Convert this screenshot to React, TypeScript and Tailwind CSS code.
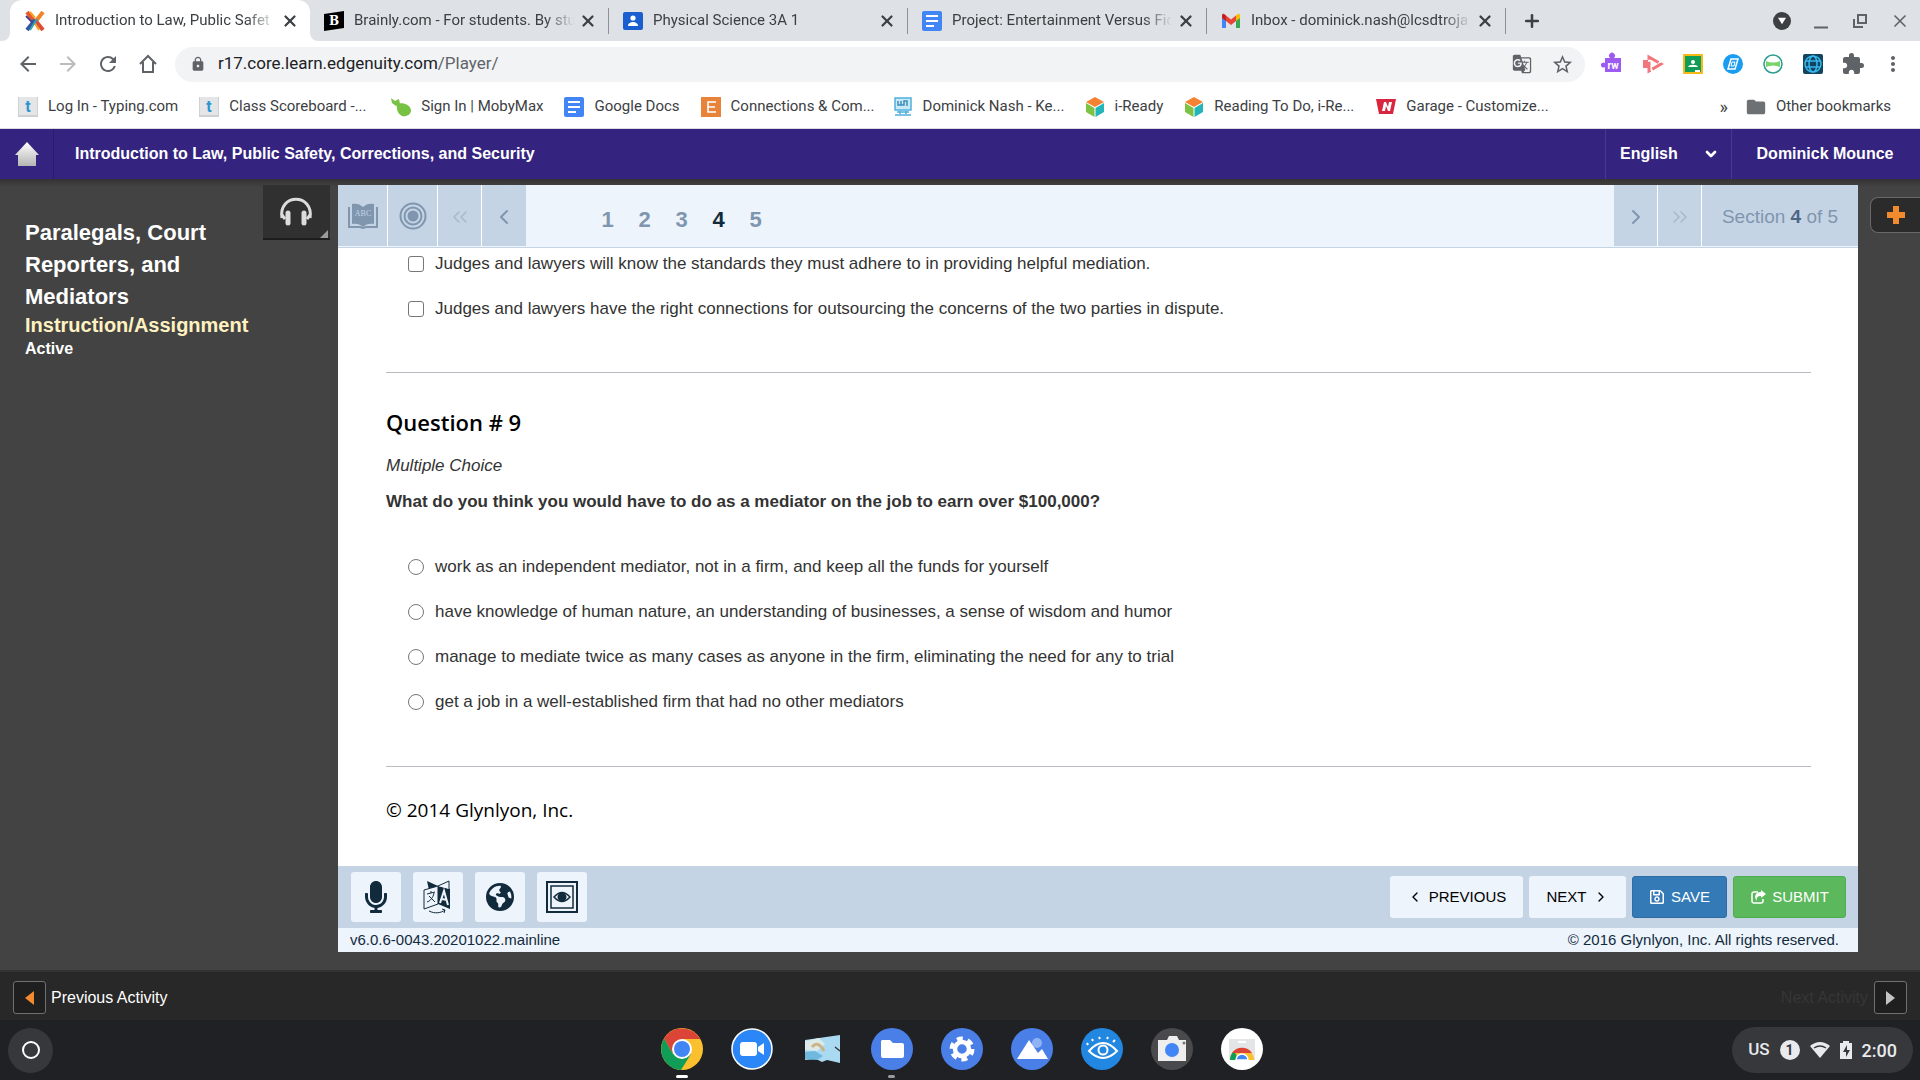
import React from "react";
import {
  MdArrowBack,
  MdArrowForward,
  MdExtension,
  MdFolder,
  MdGTranslate,
  MdLock,
  MdMoreVert,
  MdRefresh,
  MdStarBorder,
} from "react-icons/md";
import { FaMicrophone, FaRegSave } from "react-icons/fa";
import { FaEarthAmericas } from "react-icons/fa6";
import {
  ChevronDown,
  ChevronLeft,
  ChevronRight,
  ChevronsLeft,
  ChevronsRight,
  Plus,
  X,
} from "lucide-react";

/* ---------- favicons ---------- */

const EdgenuityIcon = () => (
  <svg viewBox="0 0 20 20" className="size-5 shrink-0" fill="none" strokeWidth="4">
    <path d="M2 1l7 9" stroke="#e9552c" />
    <path d="M5 1l5 6" stroke="#f5a31f" strokeWidth="2" />
    <path d="M18 1l-7 9" stroke="#f08427" />
    <path d="M10 9l8 10" stroke="#dd4a35" />
    <path d="M9 11l5 8" stroke="#f5a31f" strokeWidth="2" />
    <path d="M10 9L2 19" stroke="#35559f" />
    <path d="M12 8l-7 11" stroke="#2fa5b5" strokeWidth="2" />
    <path d="M1 5l6 6" stroke="#4a3b8f" strokeWidth="2" />
  </svg>
);

const BrainlyIcon = () => (
  <svg viewBox="0 0 20 20" className="size-5 shrink-0">
    <path d="M0 3l20-3v17L0 20z" fill="#000" />
    <text x="10" y="14" fontSize="12" fontWeight="700" fill="#fff" textAnchor="middle" fontFamily="DejaVu Serif, serif">
      B
    </text>
  </svg>
);

const ClassIcon = () => (
  <svg viewBox="0 0 20 20" className="size-5 shrink-0">
    <rect y="1" width="20" height="18" rx="2" fill="#1a5fcf" />
    <circle cx="10" cy="7" r="2.6" fill="#fff" />
    <path d="M5 15c0-3 3-4 5-4s5 1 5 4z" fill="#fff" />
  </svg>
);

const DocsIcon = () => (
  <svg viewBox="0 0 20 20" className="size-5 shrink-0">
    <rect width="20" height="20" rx="2" fill="#4285f4" />
    <path d="M4 5h12M4 10h12M4 15h8" stroke="#fff" strokeWidth="2" />
  </svg>
);

const GmailIcon = () => (
  <svg viewBox="0 0 20 20" className="size-5 shrink-0">
    <path d="M1 5v12h4V8z" fill="#4285f4" />
    <path d="M19 5v12h-4V8z" fill="#34a853" />
    <path d="M15 4.500l1.500-1.300c1-.8 2.500-.2 2.500 1.300v2.500l-4 3z" fill="#fbbc04" />
    <path d="M5 4.500L3.500 3.200C2.500 2.400 1 3 1 4.500V7l4 3z" fill="#c5221f" />
    <path d="M5 4.500l5 4 5-4V10l-5 4-5-4z" fill="#ea4335" />
  </svg>
);

const TypingIcon = () => (
  <svg viewBox="0 0 20 20" className="size-5 shrink-0 overflow-visible">
    <rect width="20" height="20" fill="#cfd0d1" />
    <rect x="1" width="18" height="18" fill="#e4e5e6" />
    <text x="10" y="15" fontSize="16" fontWeight="700" fill="#2f96d0" textAnchor="middle" fontFamily="Roboto, sans-serif">
      t
    </text>
  </svg>
);

const MobyIcon = () => (
  <svg viewBox="0 0 20 20" className="size-5 shrink-0" fill="#77c143">
    <path d="M0 1l4 3 4-2 1 5-4 2-4-3z" />
    <path d="M6 7c5-2 13 0 14 6 0 5-5 7-9 6-4-2-6-7-5-12z" />
  </svg>
);

const EIcon = () => (
  <svg viewBox="0 0 20 20" className="size-5 shrink-0">
    <rect width="20" height="20" fill="#e8833a" />
    <path d="M15 5H7v10h8M7 10h7" fill="none" stroke="#fff" strokeWidth="1.600" />
  </svg>
);

const MonitorIcon = () => (
  <svg viewBox="0 0 20 20" className="size-5 shrink-0" fill="none" stroke="#4fb0dc" strokeWidth="1.500">
    <rect x="2" y="1" width="16" height="12" fill="#c9e9f7" />
    <path d="M5 4v4h3V4M8 8h3V4h3v5" stroke="#3d8fbb" />
    <path d="M4 15h12M7 14v3M13 14v3M2 18h16" />
  </svg>
);

const CubeIcon = () => (
  <svg viewBox="0 0 20 20" className="size-5 shrink-0">
    <path d="M10 0l9 5-9 5-9-5z" fill="#f58233" />
    <path d="M1 6l8.500 5v9L1 15z" fill="#7dc243" />
    <path d="M19 6l-8.500 5v9l8.500-5z" fill="#23b5b8" />
  </svg>
);

const GarageIcon = () => (
  <svg viewBox="0 0 20 20" className="size-5 shrink-0">
    <path d="M0 2h20l-3 15H3z" fill="#d7263d" />
    <path d="M6 14l2-9h2l2 5 1-5h3l-2 9h-2l-2-5-1 5z" fill="#fff" />
  </svg>
);

/* ---------- browser chrome ---------- */

const tabs = [
  { icon: <EdgenuityIcon />, title: "Introduction to Law, Public Safet" },
  { icon: <BrainlyIcon />, title: "Brainly.com - For students. By stu" },
  { icon: <ClassIcon />, title: "Physical Science 3A 1" },
  { icon: <DocsIcon />, title: "Project: Entertainment Versus Fic" },
  { icon: <GmailIcon />, title: "Inbox - dominick.nash@lcsdtroja" },
];

const TabStrip = () => (
  <div className="flex h-[41px] items-center bg-[#dee1e6] pl-[10px] text-[#3c4043]">
    {tabs.map((tab, i) => (
      <div
        key={tab.title}
        className={
          i === 0
            ? "relative flex h-full w-[300px] items-center rounded-t-xl bg-white pr-[11px] pl-[15px]"
            : "flex h-[26px] w-[299px] items-center border-r border-[#8e9297] pr-[11px] pl-[14px]"
        }
      >
        {i === 0 && (
          <>
            <span className="absolute bottom-0 -left-2 h-2 w-2 bg-white">
              <span className="block h-2 w-2 rounded-br-lg bg-[#dee1e6]" />
            </span>
            <span className="absolute -right-2 bottom-0 h-2 w-2 bg-white">
              <span className="block h-2 w-2 rounded-bl-lg bg-[#dee1e6]" />
            </span>
          </>
        )}
        {tab.icon}
        <span className="ml-[10px] w-[225px] shrink-0 mask-r-from-85% mask-r-to-98% text-[15px] whitespace-nowrap">
          {tab.title}
        </span>
        <button aria-label="Close tab" className="ml-auto">
          <X className="size-[18px]" strokeWidth={3} />
        </button>
      </div>
    ))}
    <button aria-label="New tab" className="ml-4">
      <Plus className="size-5" strokeWidth={3} />
    </button>
    <div className="ml-auto flex items-center gap-[21px] pr-[10px] text-[#5f6368]">
      <button aria-label="Search tabs" className="flex size-[18px] items-center justify-center rounded-full bg-[#3c4043]">
        <svg viewBox="0 0 10 8" className="h-2 w-2">
          <path d="M0 0h10L5 8z" fill="#fff" />
        </svg>
      </button>
      <button aria-label="Minimize">
        <svg viewBox="0 0 18 18" className="size-[18px]">
          <path d="M2 15.500h14" stroke="currentColor" strokeWidth="2" />
        </svg>
      </button>
      <button aria-label="Restore">
        <svg viewBox="0 0 18 18" className="size-[18px]" fill="none" stroke="currentColor" strokeWidth="2">
          <path d="M7 3h8v8H7zM3 7v8h9" />
        </svg>
      </button>
      <button aria-label="Close window">
        <X className="size-5" strokeWidth={2} />
      </button>
    </div>
  </div>
);

const extensions = [
  {
    name: "Read&Write",
    art: (
      <>
        <path d="M4 6h5a3 3 0 1 1 4 0h7v14H4v-5a2.500 2.500 0 1 1 0-4z" fill="#9d5cf0" />
        <text x="12" y="17" fontSize="10" fontWeight="700" fill="#fff" textAnchor="middle" fontFamily="Roboto, sans-serif">
          rw
        </text>
      </>
    ),
  },
  {
    name: "Screencastify",
    art: (
      <>
        <path d="M2 8h5v8H2z" fill="#f2777a" />
        <path d="M8 5l12 7-12 7z" fill="none" stroke="#f2777a" strokeWidth="3" strokeDasharray="11 2" />
      </>
    ),
  },
  {
    name: "Google Classroom",
    art: (
      <>
        <rect x="2" y="2" width="20" height="20" rx="1" fill="#f5ba15" />
        <rect x="4" y="4" width="16" height="16" fill="#0f9d58" />
        <circle cx="12" cy="10" r="2" fill="#fff" />
        <path d="M7 15c1-3 9-3 10 0zM14 18h5v2h-5z" fill="#fff" />
      </>
    ),
  },
  {
    name: "Nearpod",
    art: (
      <>
        <circle cx="12" cy="12" r="10" fill="#1a9df0" />
        <path d="M10 7h7l-3 10H7z" fill="none" stroke="#fff" strokeWidth="1.500" />
        <path d="M11 10h3l-1 4h-3z" fill="none" stroke="#fff" />
      </>
    ),
  },
  {
    name: "Kami",
    art: (
      <>
        <circle cx="12" cy="12" r="9" fill="#fff" stroke="#2c9c8f" strokeWidth="1.500" />
        <path d="M5 9q7 3 14 0v6q-7-3-14 0z" fill="#7ad26a" />
      </>
    ),
  },
  {
    name: "Globe",
    art: (
      <>
        <rect x="2" y="2" width="20" height="20" rx="2" fill="#12435f" />
        <g fill="none" stroke="#35b8ee" strokeWidth="1.500">
          <circle cx="12" cy="12" r="8" />
          <ellipse cx="12" cy="12" rx="4" ry="8" />
          <path d="M5 9h14M5 15h14" />
        </g>
      </>
    ),
  },
];

const Toolbar = () => (
  <div className="flex h-[46px] items-center bg-white pr-[15px] pl-4 text-[#5f6368]">
    <div className="flex w-[159px] items-center gap-4">
      <button aria-label="Back">
        <MdArrowBack className="size-6" />
      </button>
      <button aria-label="Forward" className="text-[#babcbe]">
        <MdArrowForward className="size-6" />
      </button>
      <button aria-label="Reload">
        <MdRefresh className="size-6" />
      </button>
      <button aria-label="Home">
        <svg viewBox="0 0 24 24" className="size-6" fill="none" stroke="currentColor" strokeWidth="2">
          <path d="M4 12l8-8 8 8M7 10v10h10V10" />
        </svg>
      </button>
    </div>
    <div className="flex h-[35px] flex-1 items-center rounded-full bg-[#f1f3f4] pr-[11px] pl-[15px]">
      <MdLock className="size-4" />
      <p className="ml-3 flex-1 text-[17px] text-[#5f6368]">
        <span className="text-[#202124]">r17.core.learn.edgenuity.com</span>/Player/
      </p>
      <button aria-label="Translate this page">
        <MdGTranslate className="size-5" />
      </button>
      <button aria-label="Bookmark this page" className="ml-[19px]">
        <MdStarBorder className="size-[23px]" />
      </button>
    </div>
    <div className="ml-4 flex items-center gap-4">
      {extensions.map((ext) => (
        <button key={ext.name} aria-label={ext.name}>
          <svg viewBox="0 0 24 24" className="size-6">
            {ext.art}
          </svg>
        </button>
      ))}
      <button aria-label="Extensions">
        <MdExtension className="size-6" />
      </button>
      <button aria-label="Menu">
        <MdMoreVert className="size-6" />
      </button>
    </div>
  </div>
);

const bookmarks = [
  { icon: <TypingIcon />, label: "Log In - Typing.com" },
  { icon: <TypingIcon />, label: "Class Scoreboard -...", cut: true },
  { icon: <MobyIcon />, label: "Sign In | MobyMax" },
  { icon: <DocsIcon />, label: "Google Docs" },
  { icon: <EIcon />, label: "Connections & Com...", cut: true },
  { icon: <MonitorIcon />, label: "Dominick Nash - Ke...", cut: true },
  { icon: <CubeIcon />, label: "i-Ready" },
  { icon: <CubeIcon />, label: "Reading To Do, i-Re...", cut: true },
  { icon: <GarageIcon />, label: "Garage - Customize...", cut: true },
];

const BookmarksBar = () => (
  <div className="flex h-[42px] items-center gap-[21px] border-b border-[#dadce0] bg-white pb-[2px] pl-[18px] text-[15px] whitespace-nowrap text-[#3c4043]">
    {bookmarks.map((b) => (
      <a key={b.label} href="#" className="flex items-center gap-[10px]">
        {b.icon}
        <span className={b.cut ? "w-[141px]" : ""}>{b.label}</span>
      </a>
    ))}
    <button aria-label="More bookmarks" className="ml-auto text-lg leading-5">
      »
    </button>
    <a href="#" className="-ml-1 flex items-center gap-[9px] pr-[29px]">
      <MdFolder className="size-[22px] text-[#6e7174]" />
      Other bookmarks
    </a>
  </div>
);

/* ---------- course player ---------- */

const Header = () => (
  <header className="flex h-[50px] items-stretch bg-[#35247f] text-[16px] font-bold text-white">
    <a href="#" aria-label="Home" className="flex w-[54px] items-center justify-center border-r border-[#2a1c69]">
      <svg viewBox="0 0 24 24" className="size-6">
        <defs>
          <linearGradient id="house" x1="0" y1="0" x2="0" y2="1">
            <stop offset="0" stopColor="#ffffff" />
            <stop offset="1" stopColor="#b4b4b4" />
          </linearGradient>
        </defs>
        <path d="M12 0l12 13h-3v11H3V13H0z" fill="url(#house)" />
      </svg>
    </a>
    <h1 className="flex flex-1 items-center pl-[21px]">
      Introduction to Law, Public Safety, Corrections, and Security
    </h1>
    <label className="flex w-[126px] items-center border-l border-[#483891] pr-3 pl-[14px]">
      <select aria-label="Language" className="flex-1 appearance-none bg-transparent font-bold outline-none">
        <option>English</option>
      </select>
      <ChevronDown className="size-4" strokeWidth={4} />
    </label>
    <button className="w-[189px] border-l border-[#483891] pr-[2px] font-bold">Dominick Mounce</button>
  </header>
);

const Sidebar = () => (
  <aside className="flex w-[338px] shrink-0 items-start pr-2 pl-[25px] font-bold text-white">
    <div className="flex-1 pt-8">
      <h2 className="text-[22px] leading-8">
        Paralegals, Court Reporters, and Mediators
      </h2>
      <p className="text-[20px] leading-6 text-[#fff2c0]">Instruction/Assignment</p>
      <p className="text-[16px] leading-6">Active</p>
    </div>
    <button
      aria-label="Audio"
      className="relative -ml-4 flex h-[55px] w-[67px] items-center justify-center border-b-2 border-[#1c1c1c] bg-[#303030] pr-[2px]"
    >
      <svg viewBox="0 0 34 30" className="h-[30px] w-[34px]" fill="none" stroke="#dcdcdc">
        <path d="M3 21C-1 -4 35 -4 31 21" strokeWidth="3" />
        <path d="M9 16v10M25 16v10" strokeWidth="5" strokeLinecap="round" />
        <path d="M3 18l3 4M31 18l-3 4" strokeWidth="3" />
      </svg>
      <svg viewBox="0 0 8 8" className="absolute right-0.5 bottom-0 size-2">
        <path d="M8 0v8H0z" fill="#9a9a9a" />
      </svg>
    </button>
  </aside>
);

const pages = [1, 2, 3, 4, 5];

const SectionNav = () => (
  <nav className="flex h-[63px] border-b border-[#c5d4e5] bg-[#edf4fc] text-[#7f96ae]">
    <div className="mb-px flex gap-px bg-white">
      <button aria-label="Glossary" className="flex w-[49px] items-center justify-center bg-[#c5d4e5]">
        <svg viewBox="0 0 30 26" className="h-[26px] w-[30px]">
          <path d="M1 4v20h11l3 1 3-1h11V4" fill="none" stroke="currentColor" strokeWidth="2" />
          <path d="M4 1c4-1 8 0 11 3 3-3 7-4 11-3v20c-4-1-8 0-11 3-3-3-7-4-11-3z" fill="currentColor" />
          <text x="15" y="13" fontSize="8" fill="#c5d4e5" textAnchor="middle" fontFamily="Liberation Serif, serif">
            ABC
          </text>
        </svg>
      </button>
      <button aria-label="Objectives" className="flex w-[49px] items-center justify-center bg-[#c5d4e5]">
        <svg viewBox="0 0 28 28" className="size-7" fill="none" stroke="currentColor" strokeWidth="2">
          <circle cx="14" cy="14" r="12.500" />
          <circle cx="14" cy="14" r="8.500" />
          <circle cx="14" cy="14" r="4.500" fill="currentColor" />
        </svg>
      </button>
      <button aria-label="First section" className="flex w-[43px] items-center justify-center bg-[#c5d4e5] pt-[2px] text-[#a7b8ca]">
        <ChevronsLeft className="size-6" strokeWidth={1.5} />
      </button>
      <button aria-label="Previous section" className="flex w-11 items-center justify-center bg-[#c5d4e5] pt-[2px]">
        <ChevronLeft className="size-6" />
      </button>
    </div>
    <div className="flex flex-1 items-center gap-3 pt-[6px] pl-[69px] text-[22px] font-bold">
      {pages.map((n) => (
        <button key={n} className={n === 4 ? "w-[25px] font-bold text-[#122b3c]" : "w-[25px] font-bold"}>
          {n}
        </button>
      ))}
    </div>
    <div className="mb-px flex gap-px bg-white">
      <button aria-label="Next section" className="flex w-[43px] items-center justify-center bg-[#c5d4e5] pt-[2px]">
        <ChevronRight className="size-6" />
      </button>
      <button aria-label="Last section" className="flex w-[43px] items-center justify-center bg-[#c5d4e5] pt-[2px] text-[#a7b8ca]">
        <ChevronsRight className="size-6" strokeWidth={1.5} />
      </button>
      <p className="flex w-[156px] items-center justify-center bg-[#c5d4e5] pt-[3px] text-[19px] whitespace-pre">
        Section <b className="text-[#4c6682]">4</b> of 5
      </p>
    </div>
  </nav>
);

const checks = [
  "Judges and lawyers will know the standards they must adhere to in providing helpful mediation.",
  "Judges and lawyers have the right connections for outsourcing the concerns of the two parties in dispute.",
];

const choices = [
  "work as an independent mediator, not in a firm, and keep all the funds for yourself",
  "have knowledge of human nature, an understanding of businesses, a sense of wisdom and humor",
  "manage to mediate twice as many cases as anyone in the firm, eliminating the need for any to trial",
  "get a job in a well-established firm that had no other mediators",
];

const Questions = () => (
  <main className="flex-1 bg-white pr-[47px] pl-12 text-[17px] text-[#333]">
    <div className="flex flex-col gap-[21px] border-b border-[#b9bdc1] pt-1 pb-[51px] pl-[22px]">
      {checks.map((text) => (
        <label key={text} className="flex h-6 items-center gap-[11px]">
          <input type="checkbox" className="size-4 appearance-none rounded-[3px] border border-[#767676]" />
          {text}
        </label>
      ))}
    </div>
    <div className="border-b border-[#b9bdc1] pt-[33px] pb-[52px]">
      <h3 className="font-['Open_Sans'] text-[22px] leading-8 font-semibold text-black">Question # 9</h3>
      <p className="mt-4 leading-6 italic">Multiple Choice</p>
      <p className="mt-3 leading-6 font-bold">
        What do you think you would have to do as a mediator on the job to earn over $100,000?
      </p>
      <div className="mt-[41px] flex flex-col gap-[21px] pl-[22px]">
        {choices.map((text) => (
          <label key={text} className="flex h-6 items-center gap-[11px]">
            <input type="radio" name="q9" className="size-4 appearance-none rounded-full border border-[#767676]" />
            {text}
          </label>
        ))}
      </div>
    </div>
    <p className="pt-[27px] pb-10 font-['Open_Sans'] text-[19px] leading-8 text-black">© 2014 Glynlyon, Inc.</p>
  </main>
);

const TranslateIcon = () => (
  <svg viewBox="0 0 30 34" className="h-[34px] w-[30px]">
    <path d="M4 1l11 5-9 4zM15 6l12 3v20l-12-5z" fill="#122b3c" />
    <path d="M15 6L26 1v8M1 10l14-4v18L1 29z" fill="#edf4fc" stroke="#122b3c" />
    <path d="M4 14l8-2M8 11v2M11 13c-1 5-4 8-7 9M6 16l6 6M6 31c6 3 12 2 16-1M22 30l-3-1M22 30l-1 3" fill="none" stroke="#122b3c" />
    <path d="M17 23l4-12 4 14M19 19l5 1" fill="none" stroke="#edf4fc" strokeWidth="2" />
  </svg>
);

const FrameIcon = () => (
  <svg viewBox="0 0 32 32" className="size-8" fill="none" stroke="#122b3c" strokeWidth="2">
    <rect x="1" y="1" width="30" height="30" />
    <rect x="5" y="5" width="22" height="22" strokeWidth="1.500" />
    <path d="M8 16q8-9 16 0q-8 9-16 0z" strokeWidth="1.500" />
    <circle cx="16" cy="16" r="3.500" fill="#122b3c" />
  </svg>
);

const ShareIcon = () => (
  <svg viewBox="0 0 16 16" className="size-4">
    <path d="M8 3H4a2 2 0 0 0-2 2v7a2 2 0 0 0 2 2h7a2 2 0 0 0 2-2v-2" fill="none" stroke="currentColor" strokeWidth="1.500" />
    <path d="M11 1l5 4-5 4V7C8 7 6 8 7 12 3 7 6 3 11 3z" fill="currentColor" />
  </svg>
);

const tools = [
  { name: "Record", icon: <FaMicrophone className="size-8" /> },
  { name: "Translate", icon: <TranslateIcon /> },
  { name: "Web", icon: <FaEarthAmericas className="size-7" /> },
  { name: "Screen mask", icon: <FrameIcon /> },
];

const ActionBar = () => (
  <div className="flex h-[62px] items-center bg-[#c5d4e5] pr-3 pl-[13px] text-[15px] text-black">
    <div className="flex gap-3">
      {tools.map((tool) => (
        <button
          key={tool.name}
          aria-label={tool.name}
          className="flex size-[50px] items-center justify-center rounded-[3px] bg-[#edf4fc] text-[#122b3c]"
        >
          {tool.icon}
        </button>
      ))}
    </div>
    <div className="ml-auto flex gap-[6px]">
      <button className="flex h-[42px] w-[133px] items-center justify-center gap-[6px] rounded-[3px] bg-[#edf4fc]">
        <ChevronLeft className="size-4" />
        PREVIOUS
      </button>
      <button className="flex h-[42px] w-[97px] items-center justify-center gap-[6px] rounded-[3px] bg-[#edf4fc]">
        NEXT
        <ChevronRight className="size-4" />
      </button>
      <button className="flex h-[42px] w-[95px] items-center justify-center gap-[6px] rounded-[3px] border border-[#2e6da4] bg-[#337ab7] text-white">
        <FaRegSave className="size-4" />
        SAVE
      </button>
      <button className="flex h-[42px] w-[113px] items-center justify-center gap-[6px] rounded-[3px] border border-[#4cae4c] bg-[#5cb85c] text-white">
        <ShareIcon />
        SUBMIT
      </button>
    </div>
  </div>
);

const Player = () => (
  <div className="flex flex-1 bg-[#434343] bg-linear-to-b from-[#333] to-[#434343] to-[8px] pt-[6px] pb-[18px]">
    <Sidebar />
    <section className="flex min-w-0 flex-1 flex-col">
      <SectionNav />
      <Questions />
      <ActionBar />
      <div className="flex h-6 items-center justify-between bg-[#edf4fc] pr-[19px] pl-3 text-[15px] text-[#122b3c]">
        <span>v6.0.6-0043.20201022.mainline</span>
        <span>© 2016 Glynlyon, Inc. All rights reserved.</span>
      </div>
    </section>
    <div className="flex w-[62px] shrink-0 items-start justify-end pt-3">
      <button
        aria-label="Expand"
        className="flex h-9 w-[50px] items-center justify-center rounded-l-lg border border-r-0 border-[#686868] bg-[#2b2b2b]"
      >
        <svg viewBox="0 0 18 18" className="size-[18px]">
          <path d="M6 0h6v6h6v6h-6v6H6v-6H0V6h6z" fill="#f28a2e" />
        </svg>
      </button>
    </div>
  </div>
);

const ActivityBar = () => (
  <footer className="flex h-[50px] items-center justify-between border-t-2 border-[#333] bg-[#282828] px-[13px] pt-[3px] text-[16px]">
    <button className="flex items-center gap-[5px] text-white">
      <span className="flex size-[33px] items-center justify-center rounded-[3px] border border-[#707070] bg-[#1f1f1f]">
        <svg viewBox="0 0 9 14" className="h-[14px] w-[9px]">
          <path d="M9 0v14L0 7z" fill="#f28a2e" />
        </svg>
      </span>
      Previous Activity
    </button>
    <button className="flex items-center gap-[6px] text-[#363636]">
      Next Activity
      <span className="flex size-[33px] items-center justify-center rounded-[3px] border border-[#707070] bg-[#1f1f1f]">
        <svg viewBox="0 0 9 14" className="h-[14px] w-[9px]">
          <path d="M0 0v14l9-7z" fill="#c4c4c4" />
        </svg>
      </span>
    </button>
  </footer>
);

/* ---------- system shelf ---------- */

const apps = [
  {
    name: "Chrome",
    open: "h-[3px] w-3 rounded-full bg-white",
    art: (
      <>
        <circle cx="21" cy="21" r="21" fill="#fbc02d" />
        <path d="M3 10.500A21 21 0 0 1 39.200 11H21l-9 15z" fill="#db4437" />
        <path d="M3 10.500A21 21 0 0 0 20 42l10-16H12z" fill="#0f9d58" />
        <circle cx="21" cy="21" r="10" fill="#fff" />
        <circle cx="21" cy="21" r="8" fill="#4285f4" />
      </>
    ),
  },
  {
    name: "Zoom",
    art: (
      <>
        <circle cx="21" cy="21" r="20" fill="#2b86f7" stroke="#fff" strokeWidth="1.500" />
        <rect x="9" y="14" width="17" height="14" rx="3" fill="#fff" />
        <path d="M27 19l6-4v12l-6-4z" fill="#fff" />
      </>
    ),
  },
  {
    name: "Game",
    art: (
      <>
        <path d="M4 12l35-5v28l-13-3-5 2-6-3-11 1z" fill="#a9daf2" />
        <path d="M4 13l14-3 6 6-8 7-12-1z" fill="#dcebea" />
        <path d="M4 24l10-1 8 5-6 4-12-1z" fill="#6fb9df" />
        <path d="M11 19q6-7 12 4" fill="none" stroke="#cfb388" strokeWidth="3" />
        <path d="M34 19l5 4" stroke="#333" strokeWidth="1.500" />
      </>
    ),
  },
  {
    name: "Files",
    open: "h-[3px] w-[7px] rounded-full bg-[#9a9b9e]",
    art: (
      <>
        <circle cx="21" cy="21" r="21" fill="#4a7fe8" />
        <path d="M11 12h8l3 3h9a2 2 0 0 1 2 2v11a2 2 0 0 1-2 2H12a2 2 0 0 1-2-2V13z" fill="#fff" />
      </>
    ),
  },
  {
    name: "Settings",
    art: (
      <>
        <circle cx="21" cy="21" r="21" fill="#4a7fe8" />
        <g fill="none" stroke="#fff">
          <circle cx="21" cy="21" r="7" strokeWidth="4.500" />
          <circle cx="21" cy="21" r="10.500" strokeWidth="4" strokeDasharray="6 5" />
        </g>
      </>
    ),
  },
  {
    name: "Gallery",
    art: (
      <>
        <circle cx="21" cy="21" r="21" fill="#4a7fe8" />
        <circle cx="26" cy="15" r="5" fill="#8fb2f5" />
        <path d="M6 31l12-19 9 13 4-4 6 10z" fill="#fff" />
      </>
    ),
  },
  {
    name: "Eye",
    art: (
      <>
        <circle cx="21" cy="21" r="21" fill="#2287e0" />
        <g fill="none" stroke="#fff" strokeWidth="2">
          <path d="M8 23q14-16 28 0q-14 14-28 0z" />
          <circle cx="22" cy="22" r="4.500" />
          <path d="M7 17l-1-2M12 13l-1-2M19 11l-1-2M26 11l1-2M32 14l2-2" />
        </g>
      </>
    ),
  },
  {
    name: "Camera",
    art: (
      <>
        <circle cx="21" cy="21" r="21" fill="#4a4a4c" />
        <path d="M7 12h9l2-4h8l2 4h7v21H7z" fill="#eee" />
        <circle cx="21" cy="22" r="7" fill="#4285f4" />
        <circle cx="33" cy="15" r="1.500" fill="#777" />
      </>
    ),
  },
  {
    name: "Web Store",
    art: (
      <>
        <circle cx="21" cy="21" r="21" fill="#fff" />
        <path d="M8 11h26v21H8z" fill="#e4e5e6" />
        <path d="M17 14h8" stroke="#fff" strokeWidth="2" />
        <path d="M9 32a12 12 0 0 1 24 0z" fill="#fbc02d" />
        <path d="M9 32a12 12 0 0 1 4-9l5 9z" fill="#0f9d58" />
        <path d="M11 25a12 12 0 0 1 20 0z" fill="#db4437" />
        <path d="M15 32a6 6 0 0 1 12 0z" fill="#4285f4" stroke="#fff" strokeWidth="1.500" />
      </>
    ),
  },
];

const Shelf = () => (
  <div className="flex h-[60px] items-center justify-between bg-[#202124] pr-[7px] pl-2 font-[Roboto]">
    <div className="flex-1">
      <button aria-label="Launcher" className="flex size-[45px] items-center justify-center rounded-full bg-[#37383b]">
        <span className="size-[18px] rounded-full border-2 border-white" />
      </button>
    </div>
    <div className="flex gap-7 pb-[2px] pl-[2px]">
      {apps.map((app) => (
        <button key={app.name} aria-label={app.name} className="relative">
          <svg viewBox="0 0 42 42" className="size-[42px]">
            {app.art}
          </svg>
          {app.open && (
            <span className="absolute inset-x-0 -bottom-2 flex justify-center">
              <span className={app.open} />
            </span>
          )}
        </button>
      ))}
    </div>
    <div className="flex flex-1 justify-end">
      <button className="flex h-[46px] items-center gap-[10px] rounded-full bg-[#37383b] px-4 text-[18px] font-medium text-[#e8eaed]">
        <span className="text-[17px]">US</span>
        <span className="flex size-5 items-center justify-center rounded-full bg-[#e8eaed] text-[14px] font-bold text-[#37383b]">
          1
        </span>
        <svg viewBox="0 0 20 16" className="h-4 w-5">
          <path d="M0 4Q10-4 20 4L10 16z" fill="#e8eaed" />
          <path d="M4 6Q10 2 16 6" fill="none" stroke="#37383b" strokeWidth="1.500" />
        </svg>
        <svg viewBox="0 0 12 18" className="h-[18px] w-3">
          <path d="M3 0h6v2h3v16H0V2h3z" fill="#e8eaed" />
          <path d="M7 4l-4 7h3v5l4-7H7z" fill="#37383b" />
        </svg>
        <span>2:00</span>
      </button>
    </div>
  </div>
);

export default function App() {
  return (
    <div className="flex min-h-screen flex-col font-['Liberation_Sans',Arial,sans-serif]">
      <div className="font-[Roboto]">
        <TabStrip />
        <Toolbar />
        <BookmarksBar />
      </div>
      <Header />
      <Player />
      <ActivityBar />
      <Shelf />
    </div>
  );
}
